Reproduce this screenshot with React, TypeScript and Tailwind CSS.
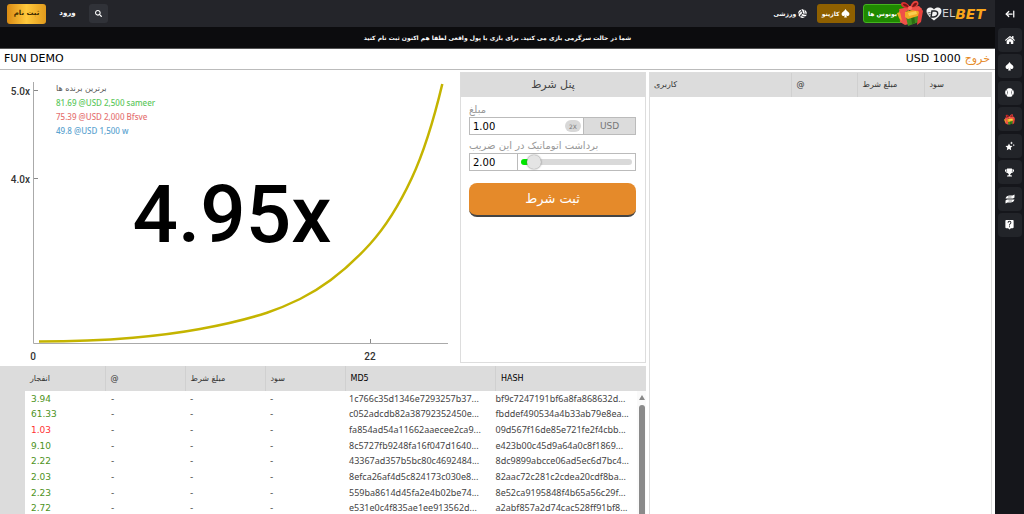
import React, { useState } from 'react'
import { ArrowLeftFromLine } from 'lucide-react'
import { BsSuitSpadeFill } from 'react-icons/bs'
import { FaBaseballBall, FaHome, FaSearch, FaTrophy, FaVolleyballBall } from 'react-icons/fa'
import { MdLiveHelp } from 'react-icons/md'

interface Round {
  crash: string
  md5: string
  hash: string
}

interface Winner {
  text: string
  color: string
}

const rounds: Round[] = [
  { crash: '3.94', md5: '1c766c35d1346e7293257b37...', hash: 'bf9c7247191bf6a8fa868632d...' },
  { crash: '61.33', md5: 'c052adcdb82a38792352450e...', hash: 'fbddef490534a4b33ab79e8ea...' },
  { crash: '1.03', md5: 'fa854ad54a11662aaecee2ca9...', hash: '09d567f16de85e721fe2f4cbb...' },
  { crash: '9.10', md5: '8c5727fb9248fa16f047d1640...', hash: 'e423b00c45d9a64a0c8f1869...' },
  { crash: '2.22', md5: '43367ad357b5bc80c4692484...', hash: '8dc9899abcce06ad5ec6d7bc4...' },
  { crash: '2.03', md5: '8efca26af4d5c824173c030e8...', hash: '82aac72c281c2cdea20cdf8ba...' },
  { crash: '2.23', md5: '559ba8614d45fa2e4b02be74...', hash: '8e52ca9195848f4b65a56c29f...' },
  { crash: '2.72', md5: 'e531e0c4f835ae1ee913562d...', hash: 'a2abf857a2d74cac528ff91bf8...' }
]

const winners: Winner[] = [
  { text: '81.69 @USD 2,500 sameer', color: 'text-[#5cc75c]' },
  { text: '75.39 @USD 2,000 Bfsve', color: 'text-[#e57373]' },
  { text: '49.8 @USD 1,500 w', color: 'text-[#5ba3d0]' }
]

const GiftIcon: React.FC<{ className?: string }> = ({ className }) => (
  <svg className={className} viewBox="0 0 26 26" aria-hidden="true">
    <path d="M2 11l7-2 3 15-4 1-5-3z" fill="#ef5148" />
    <path d="M0 13l3-1 2 9-3-3z" fill="#f2a922" />
    <path d="M8 12l12-3 2 13-11 4z" fill="#3f8f1f" />
    <path d="M14 16l3-1 1 8-3 1z" fill="#2b6b12" />
    <path d="M19 9l5-1 2 3-2 11-4 3 1-9z" fill="#e8423c" />
    <path d="M8 12l11-3 3 3-1 4-10 3-3-2z" fill="#f2a922" />
    <path d="M11 13l8-2 1 3-8 2z" fill="#f9cf4f" />
    <path d="M2 9l10-2 10-1 3 3-5 2-7-1-10 3z" fill="#ef5148" />
    <path d="M13 8C8 9 4 7 4 4s6-3 9 3z" fill="#d9302f" />
    <path d="M13 8c1-6 6-9 8-6s-2 6-8 6z" fill="#e8423c" />
    <path d="M6 4c2-1 4 0 6 3-3 0-6-1-6-3zM15 7c1-3 3-5 5-4 0 2-2 4-5 4z" fill="#7a1414" />
    <circle cx="13" cy="8" r="2" fill="#ff6f61" />
  </svg>
)

const StarsIcon: React.FC = () => (
  <svg className="size-[10px]" viewBox="0 0 20 20" fill="currentColor" aria-hidden="true">
    <path d="M8 5l2.200 4.400 4.800.7-3.500 3.400.9 4.900L8 16.100l-4.400 2.300.9-4.900L1 10.100l4.800-.7z" />
    <path d="M13 1l.9 2 2 .9-2 .9-.9 2-.9-2-2-.9 2-.9zM17.500 6l.7 1.500 1.500.7-1.500.7-.7 1.500-.7-1.500-1.500-.7 1.500-.7z" />
  </svg>
)

const CashbackIcon: React.FC = () => (
  <svg className="size-[10px]" viewBox="0 0 20 20" fill="currentColor" aria-hidden="true">
    <path d="M1 9c1-4 4-6 8-6h6l4-2v6l-3 2z" />
    <path d="M19 11c-1 4-4 6-8 6H5l-4 2v-6l3-2z" />
    <path d="M6 6h7M7 14h7" stroke="#222429" strokeWidth="1" />
  </svg>
)

const Logo: React.FC = () => (
  <a href="#home" aria-label="DELBET" className="flex items-center leading-none">
    <svg className="h-[14px] w-4" viewBox="0 0 32 28" aria-hidden="true">
      <path
        d="M16 27C7 20 1 15 1 8c0-4 3-7 7-7 3 0 6 1 8 4 2-3 5-4 8-4 4 0 7 3 7 7 0 7-6 12-15 19z"
        fill="#f2f2f2"
      />
      <path d="M12 8h6c5 0 6 4 5 7-2 4-5 5-8 5h-5z" fill="none" stroke="#222429" strokeWidth="3" />
      <path d="M3 12l6-1M5 16l4-1" stroke="#222429" strokeWidth="1.500" />
    </svg>
    <span className="text-[11px] font-normal text-[#d0d0d0]">EL</span>
    <span className="text-[14px] font-bold text-[#f9a61a] italic">BET</span>
  </a>
)

const sideItems = [
  { label: 'خانه', icon: <FaHome className="size-[10px]" /> },
  { label: 'کازینو', icon: <BsSuitSpadeFill className="size-[9px]" /> },
  { label: 'ورزشی', icon: <FaBaseballBall className="size-[9px]" /> },
  { label: 'بونوس ها', icon: <GiftIcon className="size-[11px]" /> },
  { label: 'ویژه', icon: <StarsIcon /> },
  { label: 'مسابقات', icon: <FaTrophy className="size-[9px]" /> },
  { label: 'بازگشت پول', icon: <CashbackIcon /> },
  { label: 'پشتیبانی', icon: <MdLiveHelp className="size-[11px]" /> }
]

const Sidebar: React.FC = () => (
  <aside className="w-[29px] shrink-0 bg-[#15161b] text-white">
    <button type="button" aria-label="بستن منو" className="mb-px flex h-[27px] w-full items-center justify-center">
      <ArrowLeftFromLine className="size-[10px]" strokeWidth={3} />
    </button>
    <nav className="flex h-[209px] flex-col items-center justify-between">
      {sideItems.map(item => (
        <a
          key={item.label}
          href="#menu"
          aria-label={item.label}
          className="flex size-6 items-center justify-center rounded bg-[#222429]"
        >
          {item.icon}
        </a>
      ))}
    </nav>
  </aside>
)

const Header: React.FC = () => (
  <header className="flex h-[27px] items-center justify-between bg-[#24252a] pr-[10px] pl-[7px] text-[6px] font-bold text-white">
    <div className="flex items-center">
      <button
        type="button"
        className="h-5 w-[39px] rounded-[3px] bg-linear-to-r from-[#d98a12] via-[#ffc93c] to-[#e09a1c] text-[7px] text-[#3d2a00]"
      >
        ثبت نام
      </button>
      <a href="#login" className="w-[43px] text-center text-[7px]">ورود</a>
      <button type="button" aria-label="جستجو" className="flex size-[19px] items-center justify-center rounded-[3px] bg-[#303238]">
        <FaSearch className="size-[7px]" />
      </button>
    </div>
    <nav className="flex items-center">
      <a href="#sports" dir="rtl" className="mr-[10px] flex items-center gap-[2px]">
        <FaVolleyballBall className="size-[9px]" />
        ورزشی
      </a>
      <a href="#casino" dir="rtl" className="mr-2 flex h-[19px] w-[38px] items-center justify-center gap-[2px] rounded-[3px] bg-[#8f6000]">
        <BsSuitSpadeFill className="size-[9px]" />
        کازینو
      </a>
      <a href="#bonus" className="relative mr-[3px] flex h-[19px] w-[60px] items-center">
        <span className="flex h-[19px] w-[46px] items-center rounded-[3px] border border-[#45b31f] bg-[#1f8a00] pl-1">
          بونوس ها
        </span>
        <GiftIcon className="absolute -top-1 right-0 size-[26px]" />
      </a>
      <Logo />
    </nav>
  </header>
)

const Chart: React.FC = () => (
  <section className="relative h-[296px] min-w-0 flex-1">
    <svg className="h-full w-full" viewBox="0 0 460 296" role="img" aria-label="4.95x">
      <g fill="none" stroke="#aaa" strokeWidth="1">
        <path d="M33.500 12v261.500H448" />
        <path d="M34 20.500h4M34 108.500h4M370.500 269v4" stroke="#888" />
      </g>
      <path
        d="M39 271.500C70.300 271.500 101.700 270.400 133 267.700C155.300 265.800 177.700 263.100 200 259C222.300 254.900 244.700 250 267 242.700C278 239 289 234.400 300 229C323.300 217.500 346.700 199.600 370 174C383.900 158.700 397.800 138 411.700 108.300C421.900 86.400 432.100 56.800 442.300 14"
        fill="none"
        stroke="#c4b400"
        strokeWidth="2.500"
      />
      <g className="font-[Roboto,sans-serif] text-[10px] font-medium" fill="#333">
        <text x="30" y="25" textAnchor="end">5.0x</text>
        <text x="30" y="113" textAnchor="end">4.0x</text>
        <text x="33" y="290" textAnchor="middle">0</text>
        <text x="370" y="290" textAnchor="middle">22</text>
      </g>
      <text x="232" y="172" textAnchor="middle" className="font-[Roboto,sans-serif] text-[80px] font-medium">
        4.95x
      </text>
    </svg>
    <div className="absolute top-3 left-14 text-[8px] leading-[14px] font-medium">
      <h2 className="text-[#555]">برترین برنده ها</h2>
      <ul className="font-['Noto_Sans',sans-serif]">
        {winners.map(winner => (
          <li key={winner.text} className={winner.color}>{winner.text}</li>
        ))}
      </ul>
    </div>
  </section>
)

const BetPanel: React.FC = () => {
  const [amount, setAmount] = useState('1.00')
  const [cashout, setCashout] = useState('2.00')
  const [slider, setSlider] = useState(6)

  return (
    <section className="mt-[2px] mb-[3px] w-[186px] shrink-0 border border-[#ddd]">
      <h2 className="h-6 bg-[#dcdcdc] text-center text-[11px] leading-6 text-[#444]">پنل شرط</h2>
      <form className="pt-[6px] pr-[9px] pl-2 text-[10px]" onSubmit={e => e.preventDefault()}>
        <label htmlFor="amount" className="block leading-[14px] text-[#999]">مبلغ</label>
        <div className="flex h-[18px] border border-[#bbb]">
          <input
            id="amount"
            value={amount}
            onChange={e => setAmount(e.target.value)}
            className="min-w-0 flex-1 pl-[3px] text-black outline-none"
          />
          <button type="button" className="mr-[2px] h-3 w-4 self-center rounded-full bg-[#d8d8d8] text-[6px] text-[#777]">
            2X
          </button>
          <span className="w-[52px] border-l border-[#bbb] bg-[#dcdcdc] text-center text-[9px] leading-4 text-[#777]">USD</span>
        </div>
        <label htmlFor="cashout" className="mt-1 block leading-[14px] text-[#999]">برداشت اتوماتیک در این ضریب</label>
        <div className="flex h-[18px] items-stretch border border-[#bbb]">
          <input
            id="cashout"
            value={cashout}
            onChange={e => setCashout(e.target.value)}
            className="w-12 border-r border-[#bbb] pl-[3px] text-black outline-none"
          />
          <div className="flex min-w-0 flex-1 items-center px-[3px]">
            <input
              type="range"
              aria-label="ضریب برداشت"
              min={0}
              max={100}
              value={slider}
              onChange={e => setSlider(Number(e.target.value))}
              className="h-[6px] w-full appearance-none rounded-full bg-[linear-gradient(to_right,#00e600_10%,#d9d9d9_10%)] [&::-webkit-slider-thumb]:size-[14px] [&::-webkit-slider-thumb]:appearance-none [&::-webkit-slider-thumb]:rounded-full [&::-webkit-slider-thumb]:bg-[#e4e4e4] [&::-webkit-slider-thumb]:shadow-[0_0_2px_#666]"
            />
          </div>
        </div>
        <button type="submit" className="mt-3 h-[34px] w-full rounded-lg border-b-2 border-[#444] bg-[#e58a2a] text-[13px] text-white">
          ثبت شرط
        </button>
      </form>
    </section>
  )
}

const History: React.FC = () => (
  <section className="relative">
    <table className="w-full table-fixed text-left text-[9px]">
      <thead>
        <tr className="h-[25px] bg-[#dcdcdc] text-[8px] text-[#333]">
          <th className="w-[25px]" aria-label="#" />
          <th className="w-20 pl-[5px] font-normal">انفجار</th>
          <th className="w-20 border-l border-[#d0d0d0] pl-[5px] font-normal">@</th>
          <th className="w-20 border-l border-[#d0d0d0] pl-[5px] font-normal">مبلغ شرط</th>
          <th className="w-20 border-l border-[#d0d0d0] pl-[5px] font-normal">سود</th>
          <th className="border-l border-[#d0d0d0] pl-[5px] font-normal text-black">MD5</th>
          <th className="border-l border-[#d0d0d0] pl-[5px] font-normal text-black">HASH</th>
        </tr>
      </thead>
    </table>
    <table className="h-[125px] w-full table-fixed text-left text-[9px] leading-[14px] text-[#444]">
      <tbody>
        {rounds.map(round => (
          <tr key={round.md5}>
            <td className="w-[25px] bg-[#dcdcdc]" />
            <td className={round.crash === '1.03' ? 'w-20 pl-[6px] text-[#f33]' : 'w-20 pl-[6px] text-[#4d9221]'}>
              {round.crash}
            </td>
            <td className="w-20 pl-[6px]">-</td>
            <td className="w-20 pl-[5px]">-</td>
            <td className="w-20 pl-[5px]">-</td>
            <td className="pl-1 font-['Noto_Sans',sans-serif] whitespace-nowrap">{round.md5}</td>
            <td className="font-['Noto_Sans',sans-serif] whitespace-nowrap">{round.hash}</td>
          </tr>
        ))}
      </tbody>
    </table>
    {/* Scrollbar */}
    <div className="absolute top-[25px] right-0 bottom-0 flex w-[9px] flex-col items-center bg-[#fafafa] pt-1" aria-hidden="true">
      <svg className="h-[5px] w-[6px]" viewBox="0 0 6 5">
        <path d="M3 0l3 5H0z" fill="#888" />
      </svg>
      <div className="mt-[5px] w-[6px] flex-1 rounded-t-full bg-[#8a8a8a]" />
    </div>
  </section>
)

const Players: React.FC = () => (
  <section className="mx-[3px] mt-[2px] w-[343px] shrink-0 border border-b-0 border-[#ddd]">
    <table className="w-full table-fixed text-left text-[8px] text-[#333]">
      <thead>
        <tr className="h-6 bg-[#dcdcdc]">
          <th className="pl-1 font-normal">کاربری</th>
          <th className="w-[66px] border-l border-[#d0d0d0] pl-[5px] font-normal">@</th>
          <th className="w-[67px] border-l border-[#d0d0d0] pl-[5px] font-normal">مبلغ شرط</th>
          <th className="w-[67px] border-l border-[#d0d0d0] pl-[5px] font-normal">سود</th>
        </tr>
      </thead>
    </table>
  </section>
)

const App: React.FC = () => {
  return (
    <div className="flex h-screen overflow-hidden bg-white font-['DejaVu_Sans',sans-serif]">
      <main className="flex min-w-0 flex-1 flex-col">
        <Header />
        <p dir="rtl" className="h-[22px] border-b border-[#555] bg-[#0c0c0e] text-center text-[6px] leading-[22px] font-bold text-white">
          شما در حالت سرگرمی بازی می کنید. برای بازی با پول واقعی لطفا هم اکنون ثبت نام کنید
        </p>
        <div className="flex h-[21px] shrink-0 items-center justify-between border-b border-[#bbb] pr-[5px] pl-1 text-[11px] text-black">
          <span>FUN DEMO</span>
          <div className="flex items-center gap-1">
            <span>USD 1000</span>
            <a href="#exit" className="text-[#e58a2a]">خروج</a>
          </div>
        </div>
        <div className="flex min-h-0 flex-1">
          <div className="flex min-w-0 flex-1 flex-col">
            <div className="flex">
              <Chart />
              <BetPanel />
            </div>
            <History />
          </div>
          <Players />
        </div>
      </main>
      <Sidebar />
    </div>
  )
}

export default App
